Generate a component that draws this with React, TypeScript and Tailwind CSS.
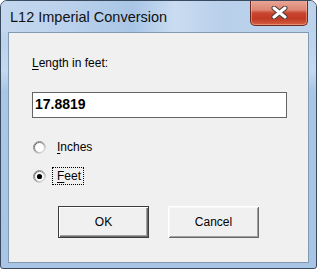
import React from "react";

function Radio({ checked }: { checked: boolean }) {
  return (
    <svg width="13" height="13" viewBox="0 0 13 13" className="shrink-0">
      <defs>
        <linearGradient id={checked ? "o1" : "o2"} x1="0" y1="0" x2="1" y2="1">
          <stop offset="0" stopColor="#7a7a7a" />
          <stop offset="0.5" stopColor="#a0a0a0" />
          <stop offset="1" stopColor="#ffffff" />
        </linearGradient>
        <linearGradient id={checked ? "i1" : "i2"} x1="0" y1="0" x2="1" y2="1">
          <stop offset="0" stopColor="#505050" />
          <stop offset="0.5" stopColor="#9a9a9a" />
          <stop offset="1" stopColor="#e3e3e3" />
        </linearGradient>
      </defs>
      <circle cx="6.5" cy="6.5" r="6" fill="none" stroke={`url(#${checked ? "o1" : "o2"})`} strokeWidth="1" />
      <circle cx="6.5" cy="6.5" r="5" fill="#ffffff" stroke={`url(#${checked ? "i1" : "i2"})`} strokeWidth="1" />
      {checked && <circle cx="6.5" cy="6.5" r="2.6" fill="#000000" />}
    </svg>
  );
}

export default function App() {
  const ui = { fontFamily: '"Liberation Sans", Arial, sans-serif' };
  return (
    <div className="w-[317px] h-[269px] bg-white">
      <div
        className="w-[317px] h-[269px] flex flex-col rounded-t-[7px] rounded-b-[3px] border border-[#3a4a5e] overflow-hidden"
        style={{
          background:
            "linear-gradient(180deg, #c9dcf1 0px, #bcd3ec 40px, #c5d9ef 70px, #a9c6e7 90px, #a8c5e6 269px)",
        }}
      >
        {/* Title bar */}
        <div
          className="h-[31px] flex items-start justify-between"
          style={{
            background:
              "linear-gradient(90deg, #c3d7ee 0%, #bcd2ec 20%, #a9c5e6 42%, #c9dcf1 55%, #b9d0eb 70%, #bdd3ec 100%)",
          }}
        >
          <div
            className="pl-[9px] pt-[6px] text-[14.5px] leading-[20px] text-[#111]"
            style={{ fontFamily: '"Liberation Sans", Arial, sans-serif' }}
          >
            L12 Imperial Conversion
          </div>
          <div
            className="mt-[-1px] mr-[8px] w-[58px] h-[26px] rounded-b-[5px] border border-t-0 border-[#6b2b22] flex items-center justify-center"
            style={{
              background:
                "linear-gradient(180deg, #e9a99b 0%, #dd8572 40%, #c9452f 52%, #c13a24 75%, #d4603f 100%)",
              boxShadow: "inset 0 0 0 1px rgba(255,200,180,0.45)",
            }}
          >
            <svg width="17" height="13" viewBox="0 0 17 13">
              <path d="M3 2 L14 11 M14 2 L3 11" stroke="#4b3a38" strokeWidth="5" strokeLinecap="round" />
              <path d="M3 2 L14 11 M14 2 L3 11" stroke="#ffffff" strokeWidth="3" strokeLinecap="round" />
            </svg>
          </div>
        </div>

        {/* Client area */}
        <div className="mx-[7px] mb-[5px] h-[231px] border border-[#8299b4] bg-[#f0f0f0] flex flex-col pl-[23px]" style={ui}>
          <div className="mt-[23px] text-[12px] leading-[14px] text-black">
            <span className="underline underline-offset-2">L</span>ength in feet:
          </div>
          <div className="mt-[22px] w-[255px] h-[26px] border border-[#646464] bg-white pl-[2px] pt-[3px] text-[14px] leading-[16px] font-bold text-black">
            17.8819
          </div>
          <div className="mt-[21px] h-[16px] flex items-center pl-[1px]">
            <Radio checked={false} />
            <div className="ml-[6px] border border-transparent pl-[4px] pr-[2px] text-[12px] leading-[16px] text-black">
              <span className="underline underline-offset-2">I</span>nches
            </div>
          </div>
          <div className="mt-[12px] h-[18px] flex items-center pl-[1px]">
            <Radio checked={true} />
            <div className="ml-[6px] h-[18px] border border-dotted border-black pl-[4px] pr-[2px] text-[12px] leading-[16px] text-black">
              <span className="underline underline-offset-2">F</span>eet
            </div>
          </div>
          <div className="mt-[21px] ml-[26px] flex gap-[19px]">
            <button
              className="w-[91px] h-[32px] bg-[#f0f0f0] border border-[#3c3c3c] text-[12px] text-black"
              style={{ ...ui, boxShadow: "inset 1px 1px #ffffff, inset -1px -1px #696969, inset -2px -2px #a0a0a0" }}
            >
              OK
            </button>
            <button
              className="w-[91px] h-[32px] bg-[#f0f0f0] text-[12px] text-black"
              style={{
                ...ui,
                boxShadow:
                  "inset 1px 1px #ffffff, inset -1px -1px #696969, inset 2px 2px #f8f8f8, inset -2px -2px #a0a0a0",
              }}
            >
              Cancel
            </button>
          </div>
        </div>
      </div>
    </div>
  );
}
